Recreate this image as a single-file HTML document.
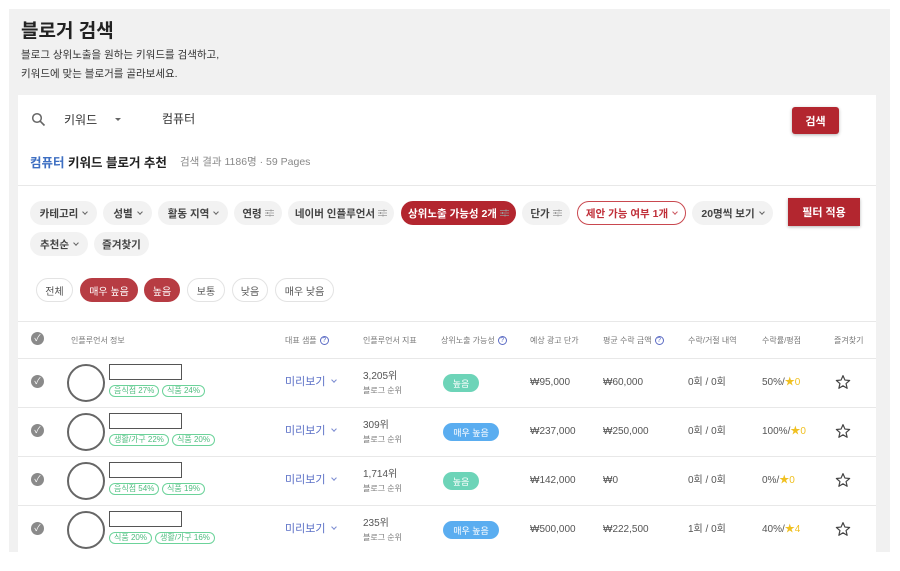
<!DOCTYPE html>
<html><head><meta charset="utf-8">
<style>
*{margin:0;padding:0;box-sizing:border-box}
body{width:900px;height:571px;background:#fff;font-family:"Liberation Sans","Noto Sans CJK KR",sans-serif;position:relative;overflow:hidden;color:#333}
.a{position:absolute;white-space:nowrap}
.chip{position:absolute;height:24px;border-radius:12px;background:#f2f2f2;font-size:10.5px;font-weight:bold;color:#444;display:flex;align-items:center;justify-content:center}
.chip.r{background:#b3262f;color:#fff}
.chip.o{background:#fff;border:1px solid #c9484f;color:#c0303a}
.cv{display:inline-block;width:4px;height:4px;border-right:1px solid currentColor;border-bottom:1px solid currentColor;transform:rotate(45deg);margin:0 0 3px 5px;opacity:.8}
.sl{margin-left:3px}
.pill{position:absolute;top:278px;height:24px;border-radius:12px;border:1px solid #e3e3e3;font-size:10px;color:#555;display:flex;align-items:center;justify-content:center;background:#fff}
.pill.r{background:#b73c43;color:#fff;border-color:#b73c43}
.h{position:absolute;top:335px;font-size:8px;color:#777}
.q{display:inline-block;width:9px;height:9px;border:1px solid #5b6bc4;border-radius:50%;font-size:7px;color:#5b6bc4;text-align:center;line-height:7px;vertical-align:middle;margin-left:3px}
.line{position:absolute;left:18px;width:858px;height:1px;background:#e8e8e8}
.chk{position:absolute;left:31px;width:13px;height:13px;border-radius:50%;background:#8a8a8a;color:#fff;font-size:9px;text-align:center;line-height:13px}
.cir{position:absolute;left:67px;width:38px;height:38px;border-radius:50%;border:2px solid #666}
.nb{position:absolute;left:109px;width:73px;height:16px;border:1.5px solid #555}
.tag{position:absolute;height:12px;border:1px solid #6cd39a;border-radius:6px;font-size:8px;color:#4dbb7d;padding:0 4px;line-height:10px}
.pv{position:absolute;left:285px;font-size:11px;color:#5a6fc6;line-height:14px}
.pv .cv{margin-left:7px}
.rk{position:absolute;left:363px;font-size:10px;color:#555;line-height:12px}
.rk2{position:absolute;left:363px;font-size:8px;color:#777;line-height:10px}
.bd{position:absolute;height:18px;border-radius:9px;color:#fff;font-size:9px;display:flex;align-items:center;justify-content:center}
.g{background:#6dd4b8}.b{background:#5aadf0}
.v{position:absolute;font-size:10px;color:#555;line-height:12px}
.st{color:#f0c020}
.star{position:absolute;left:835px}
</style></head><body>
<svg width="0" height="0" style="position:absolute"><defs><symbol id="sl" viewBox="0 0 9 8"><path d="M0 1.5H9M0 4H9M0 6.5H9" stroke="#999" stroke-width="0.8"/><path d="M6 0.5V2.5M2.5 3V5M5 5.5V7.5" stroke="#999" stroke-width="1"/></symbol><symbol id="star" viewBox="0 0 24 24"><path d="M12 2.5l2.9 6.6 7.1.6-5.4 4.7 1.6 7-6.2-3.7-6.2 3.7 1.6-7L2 9.7l7.1-.6z" fill="none" stroke="#444" stroke-width="1.8" stroke-linejoin="round"/></symbol></defs></svg>
<div class="a" style="left:9px;top:9px;width:881px;height:543px;background:#f1f1f1"></div>
<div class="a" style="left:18px;top:95px;width:858px;height:457px;background:#fff"></div>
<div class="a" style="left:21px;top:16px;font-size:19px;font-weight:bold;color:#222">블로거 검색</div>
<div class="a" style="left:21px;top:47px;font-size:10.5px;color:#333">블로그 상위노출을 원하는 키워드를 검색하고,</div>
<div class="a" style="left:21px;top:66px;font-size:10.5px;color:#333">키워드에 맞는 블로거를 골라보세요.</div>

<svg class="a" style="left:31px;top:112px" width="15" height="15" viewBox="0 0 15 15"><circle cx="6" cy="6" r="4.3" fill="none" stroke="#666" stroke-width="1.5"/><path d="M9.2 9.2L13.5 13.5" stroke="#666" stroke-width="1.6"/></svg>
<div class="a" style="left:64px;top:111px;font-size:12px;color:#333">키워드</div>
<div class="a" style="left:115px;top:118px;width:0;height:0;border-left:3.5px solid transparent;border-right:3.5px solid transparent;border-top:3.5px solid #666"></div>
<div class="a" style="left:162px;top:110px;font-size:12px;color:#333">컴퓨터</div>
<div class="a" style="left:792px;top:107px;width:47px;height:27px;background:#b3262f;border-radius:3px;color:#fff;font-size:11px;font-weight:bold;display:flex;align-items:center;justify-content:center;box-shadow:0 1px 3px rgba(0,0,0,.3)">검색</div>

<div class="a" style="left:30px;top:152px;font-size:12.5px;font-weight:bold;color:#222"><span style="color:#3e6fc2">컴퓨터</span> 키워드 블로거 추천</div>
<div class="a" style="left:180px;top:154px;font-size:10.5px;color:#888">검색 결과 1186명 · 59 Pages</div>

<div class="line" style="top:185px"></div>

<div class="chip" style="left:30px;top:201px;width:67px">카테고리<span class="cv"></span></div>
<div class="chip" style="left:103px;top:201px;width:49px">성별<span class="cv"></span></div>
<div class="chip" style="left:158px;top:201px;width:70px">활동 지역<span class="cv"></span></div>
<div class="chip" style="left:234px;top:201px;width:48px">연령<svg class="sl" width="9" height="8"><use href="#sl"/></svg></div>
<div class="chip" style="left:288px;top:201px;width:106px">네이버 인플루언서<svg class="sl" width="9" height="8"><use href="#sl"/></svg></div>
<div class="chip r" style="left:401px;top:201px;width:115px">상위노출 가능성 2개<svg class="sl" width="9" height="8"><use href="#sl"/></svg></div>
<div class="chip" style="left:522px;top:201px;width:48px">단가<svg class="sl" width="9" height="8"><use href="#sl"/></svg></div>
<div class="chip o" style="left:577px;top:201px;width:109px">제안 가능 여부 1개<span class="cv"></span></div>
<div class="chip" style="left:692px;top:201px;width:81px">20명씩 보기<span class="cv"></span></div>
<div class="a" style="left:788px;top:198px;width:72px;height:28px;background:#b3262f;color:#fff;font-size:11px;font-weight:bold;display:flex;align-items:center;justify-content:center;box-shadow:0 1px 3px rgba(0,0,0,.3)">필터 적용</div>
<div class="chip" style="left:30px;top:232px;width:58px">추천순<span class="cv"></span></div>
<div class="chip" style="left:94px;top:232px;width:55px">즐겨찾기</div>

<div class="pill" style="left:36px;width:37px">전체</div>
<div class="pill r" style="left:80px;width:58px">매우 높음</div>
<div class="pill r" style="left:144px;width:36px">높음</div>
<div class="pill" style="left:187px;width:38px">보통</div>
<div class="pill" style="left:232px;width:36px">낮음</div>
<div class="pill" style="left:275px;width:59px">매우 낮음</div>

<div class="line" style="top:321px"></div>
<div class="chk" style="top:332px">✓</div>
<div class="h" style="left:71px">인플루언서 정보</div>
<div class="h" style="left:285px">대표 샘플<span class="q">?</span></div>
<div class="h" style="left:363px">인플루언서 지표</div>
<div class="h" style="left:441px">상위노출 가능성<span class="q">?</span></div>
<div class="h" style="left:530px">예상 광고 단가</div>
<div class="h" style="left:603px">평균 수락 금액<span class="q">?</span></div>
<div class="h" style="left:688px">수락/거절 내역</div>
<div class="h" style="left:762px">수락률/평점</div>
<div class="h" style="left:834px">즐겨찾기</div>
<div class="line" style="top:358px"></div>

<!-- row1 -->
<div class="chk" style="top:375px">✓</div>
<div class="cir" style="top:364px"></div>
<div class="nb" style="top:364px"></div>
<div class="tag" style="left:109px;top:385px">음식점 27%</div>
<div class="tag" style="left:162px;top:385px">식품 24%</div>
<div class="pv" style="top:375px">미리보기<span class="cv"></span></div>
<div class="rk" style="top:371px">3,205위</div>
<div class="rk2" style="top:386px">블로그 순위</div>
<div class="bd g" style="left:443px;top:374px;width:36px">높음</div>
<div class="v" style="left:530px;top:377px">₩95,000</div>
<div class="v" style="left:603px;top:377px">₩60,000</div>
<div class="v" style="left:688px;top:377px">0회 / 0회</div>
<div class="v" style="left:762px;top:377px">50%/<span class="st">★0</span></div>
<svg class="star" style="top:374px" width="16" height="16"><use href="#star"/></svg>
<div class="line" style="top:407px"></div>

<!-- row2 -->
<div class="chk" style="top:424px">✓</div>
<div class="cir" style="top:413px"></div>
<div class="nb" style="top:413px"></div>
<div class="tag" style="left:109px;top:434px">생활/가구 22%</div>
<div class="tag" style="left:172px;top:434px">식품 20%</div>
<div class="pv" style="top:424px">미리보기<span class="cv"></span></div>
<div class="rk" style="top:420px">309위</div>
<div class="rk2" style="top:435px">블로그 순위</div>
<div class="bd b" style="left:443px;top:423px;width:56px">매우 높음</div>
<div class="v" style="left:530px;top:426px">₩237,000</div>
<div class="v" style="left:603px;top:426px">₩250,000</div>
<div class="v" style="left:688px;top:426px">0회 / 0회</div>
<div class="v" style="left:762px;top:426px">100%/<span class="st">★0</span></div>
<svg class="star" style="top:423px" width="16" height="16"><use href="#star"/></svg>
<div class="line" style="top:456px"></div>

<!-- row3 -->
<div class="chk" style="top:473px">✓</div>
<div class="cir" style="top:462px"></div>
<div class="nb" style="top:462px"></div>
<div class="tag" style="left:109px;top:483px">음식점 54%</div>
<div class="tag" style="left:162px;top:483px">식품 19%</div>
<div class="pv" style="top:473px">미리보기<span class="cv"></span></div>
<div class="rk" style="top:469px">1,714위</div>
<div class="rk2" style="top:484px">블로그 순위</div>
<div class="bd g" style="left:443px;top:472px;width:36px">높음</div>
<div class="v" style="left:530px;top:475px">₩142,000</div>
<div class="v" style="left:603px;top:475px">₩0</div>
<div class="v" style="left:688px;top:475px">0회 / 0회</div>
<div class="v" style="left:762px;top:475px">0%/<span class="st">★0</span></div>
<svg class="star" style="top:472px" width="16" height="16"><use href="#star"/></svg>
<div class="line" style="top:505px"></div>

<!-- row4 -->
<div class="chk" style="top:522px">✓</div>
<div class="cir" style="top:511px"></div>
<div class="nb" style="top:511px"></div>
<div class="tag" style="left:109px;top:532px">식품 20%</div>
<div class="tag" style="left:155px;top:532px">생활/가구 16%</div>
<div class="pv" style="top:522px">미리보기<span class="cv"></span></div>
<div class="rk" style="top:518px">235위</div>
<div class="rk2" style="top:533px">블로그 순위</div>
<div class="bd b" style="left:443px;top:521px;width:56px">매우 높음</div>
<div class="v" style="left:530px;top:524px">₩500,000</div>
<div class="v" style="left:603px;top:524px">₩222,500</div>
<div class="v" style="left:688px;top:524px">1회 / 0회</div>
<div class="v" style="left:762px;top:524px">40%/<span class="st">★4</span></div>
<svg class="star" style="top:521px" width="16" height="16"><use href="#star"/></svg>
</body></html>
